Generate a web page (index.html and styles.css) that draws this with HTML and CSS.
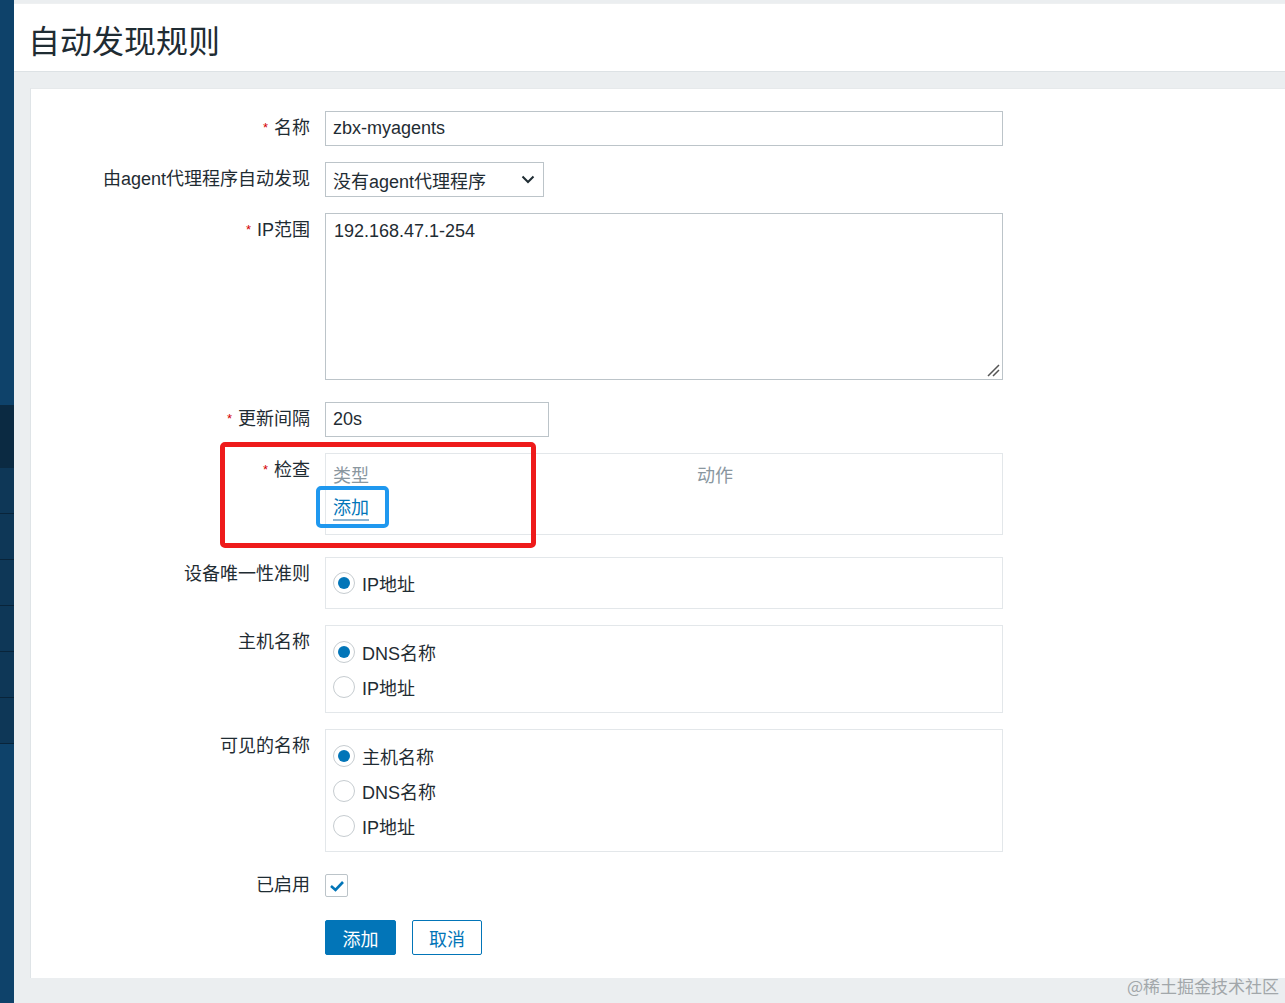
FILE: index.html
```html
<!DOCTYPE html>
<html lang="zh">
<head>
<meta charset="utf-8">
<title>自动发现规则</title>
<link rel="stylesheet" href="styles.css">
</head>
<body>
<div class="app">
  <aside class="sidebar">
    <div class="sb-top"></div>
    <div class="sb-dark"></div>
    <div class="sb-item"></div>
    <div class="sb-item"></div>
    <div class="sb-item"></div>
    <div class="sb-item"></div>
    <div class="sb-item"></div>
    <div class="sb-item"></div>
    <div class="sb-rest"></div>
  </aside>
  <main class="main">
    <header class="header">
      <h1 class="title">自动发现规则</h1>
    </header>
    <div class="content">
      <section class="panel">
        <div class="row">
          <label class="lbl"><span class="req">*</span>名称</label>
          <div class="field"><input class="input wide" type="text" value="zbx-myagents"></div>
        </div>
        <div class="row">
          <label class="lbl">由agent代理程序自动发现</label>
          <div class="field">
            <div class="select">
              <span>没有agent代理程序</span>
              <svg class="chev" width="14" height="9" viewBox="0 0 14 9"><path d="M1.5 1.5 L7 7 L12.5 1.5" fill="none" stroke="#1f2c33" stroke-width="2"/></svg>
            </div>
          </div>
        </div>
        <div class="row row-ta">
          <label class="lbl"><span class="req">*</span>IP范围</label>
          <div class="field">
            <div class="textarea">192.168.47.1-254
              <svg class="grip" width="14" height="14" viewBox="0 0 14 14"><path d="M2 13 L13 2 M7 13 L13 7" stroke="#555" stroke-width="1.5"/></svg>
            </div>
          </div>
        </div>
        <div class="row">
          <label class="lbl"><span class="req">*</span>更新间隔</label>
          <div class="field"><input class="input short" type="text" value="20s"></div>
        </div>
        <div class="row row-gap">
          <label class="lbl"><span class="req">*</span>检查</label>
          <div class="field">
            <div class="checks">
              <div class="checks-head">
                <span class="col1">类型</span>
                <span class="col2">动作</span>
              </div>
              <a class="link">添加</a>
            </div>
          </div>
        </div>
        <div class="row">
          <label class="lbl">设备唯一性准则</label>
          <div class="field">
            <div class="box">
              <div class="radio"><span class="dot on"></span>IP地址</div>
            </div>
          </div>
        </div>
        <div class="row">
          <label class="lbl">主机名称</label>
          <div class="field">
            <div class="box">
              <div class="radio"><span class="dot on"></span>DNS名称</div>
              <div class="radio"><span class="dot"></span>IP地址</div>
            </div>
          </div>
        </div>
        <div class="row">
          <label class="lbl">可见的名称</label>
          <div class="field">
            <div class="box">
              <div class="radio"><span class="dot on"></span>主机名称</div>
              <div class="radio"><span class="dot"></span>DNS名称</div>
              <div class="radio"><span class="dot"></span>IP地址</div>
            </div>
          </div>
        </div>
        <div class="row row-cb">
          <label class="lbl">已启用</label>
          <div class="field">
            <span class="checkbox">
              <svg width="16" height="14" viewBox="0 0 16 14"><path d="M2 7 L6.5 11 L14 3" fill="none" stroke="#0275b8" stroke-width="2.6"/></svg>
            </span>
          </div>
        </div>
        <div class="row row-btn">
          <div class="lbl"></div>
          <div class="field buttons">
            <button class="btn primary">添加</button>
            <button class="btn secondary">取消</button>
          </div>
        </div>
        <div class="mark-red"></div>
        <div class="mark-blue"></div>
      </section>
    </div>
  </main>
</div>
<div class="watermark">@稀土掘金技术社区</div>
</body>
</html>
```
FILE: styles.css
```css
* { box-sizing: border-box; }
html, body { margin: 0; padding: 0; }
body {
  width: 1285px;
  height: 1003px;
  overflow: hidden;
  background: #ebeef0;
  font-family: "Liberation Sans", "Noto Sans CJK SC", sans-serif;
  color: #1f2c33;
  font-size: 18px;
  position: relative;
}
.app { display: flex; height: 1003px; }
.sidebar {
  width: 14px;
  flex: none;
  display: flex;
  flex-direction: column;
  background: #0e426a;
}
.sb-top { height: 405px; background: #0e426a; }
.sb-dark { height: 63px; background: #0b2a42; }
.sb-item { height: 46px; background: #0e3757; border-bottom: 1px solid #09243a; }
.sb-rest { flex: 1; background: #0e426a; }

.main { flex: 1; display: flex; flex-direction: column; min-width: 0; }
.header {
  margin-top: 3px;
  height: 69px;
  background: #fff;
  border-bottom: 1px solid #dde2e5;
  border-top: 1px solid #eef0f1;
  padding-left: 14px;
  display: flex;
  align-items: center;
}
.title {
  margin: 0;
  font-weight: normal;
  font-size: 32px;
  color: #1f2c33;
  padding-top: 2px;
}
.content { padding: 16px 0 0 16px; }
.panel {
  position: relative;
  height: 890px;
  background: #fff;
  border-left: 1px solid #dfe4e7;
  border-top: 1px solid #e6e9eb;
  padding-top: 22px;
  display: flex;
  flex-direction: column;
}
.row { display: flex; align-items: flex-start; margin-bottom: 16px; }
.row-ta { margin-bottom: 22px; }
.row-gap { margin-bottom: 22px; }
.row-cb { align-items: center; margin-top: 6px; margin-bottom: 23px; }
.lbl {
  width: 279px;
  height: 35px;
  flex: none;
  text-align: right;
  line-height: 35px;
  margin-right: 15px;
  white-space: nowrap;
}
.row-cb .lbl { line-height: 23px; height: 23px; }
.req { color: #d40000; font-size: 13px; line-height: 1; margin-right: 6px; vertical-align: 2px; }
.field { flex: none; display: flex; }
.input {
  display: block;
  height: 35px;
  border: 1px solid #bcc4c9;
  font: inherit;
  color: #1f2c33;
  padding: 0 7px;
  background: #fff;
  outline: none;
}
.input.wide { width: 678px; }
.input.short { width: 224px; }
.select {
  width: 219px;
  height: 35px;
  border: 1px solid #bcc4c9;
  display: flex;
  align-items: center;
  justify-content: space-between;
  padding: 0 6px 0 7px;
}
.chev { margin-right: 2px; }
.textarea {
  position: relative;
  width: 678px;
  height: 167px;
  border: 1px solid #bcc4c9;
  padding: 6px 8px;
  line-height: 22px;
}
.grip { position: absolute; right: 2px; bottom: 2px; }
.checks {
  width: 678px;
  height: 82px;
  border: 1px solid #e3e7ea;
  padding: 10px 0 0 7px;
}
.checks-head { display: flex; line-height: 24px; color: #8a979f; }
.checks-head .col1 { width: 364px; }
.link {
  display: inline-block;
  margin-top: 9px;
  color: #0275b8;
  line-height: 22px;
  border-bottom: 2px solid #8fb4cf;
}
.box {
  width: 678px;
  border: 1px solid #e3e7ea;
  padding: 8px 0 8px 7px;
}
.radio {
  height: 35px;
  display: flex;
  align-items: center;
}
.box .radio:only-child { height: 34px; }
.dot {
  width: 22px;
  height: 22px;
  border-radius: 50%;
  border: 1px solid #c6ccd0;
  margin-right: 7px;
  position: relative;
  background: #fff;
  flex: none;
}
.dot.on::after {
  content: "";
  position: absolute;
  left: 4px;
  top: 4px;
  width: 12px;
  height: 12px;
  border-radius: 50%;
  background: #0275b8;
}
.checkbox {
  width: 23px;
  height: 23px;
  border: 1px solid #bcc4c9;
  border-radius: 2px;
  display: flex;
  align-items: center;
  justify-content: center;
}
.buttons { display: flex; gap: 16px; }
.btn {
  height: 35px;
  font: inherit;
  border-radius: 2px;
  padding: 0;
  width: 71px;
}
.btn.primary { background: #0275b8; color: #fff; border: 1px solid #0275b8; }
.btn.secondary { background: #fff; color: #0275b8; border: 1px solid #0275b8; width: 70px; }
.mark-red {
  position: absolute;
  left: 189px;
  top: 353px;
  width: 316px;
  height: 106px;
  border: 5px solid #ee1b1b;
  border-radius: 5px;
}
.mark-blue {
  position: absolute;
  left: 285px;
  top: 397px;
  width: 73px;
  height: 42px;
  border: 4px solid #1f98ef;
  border-radius: 5px;
}
.watermark {
  position: absolute;
  right: 6px;
  bottom: 5px;
  color: #a2a7aa;
  font-size: 17px;
  font-family: "Noto Sans CJK SC", sans-serif;
}
```
